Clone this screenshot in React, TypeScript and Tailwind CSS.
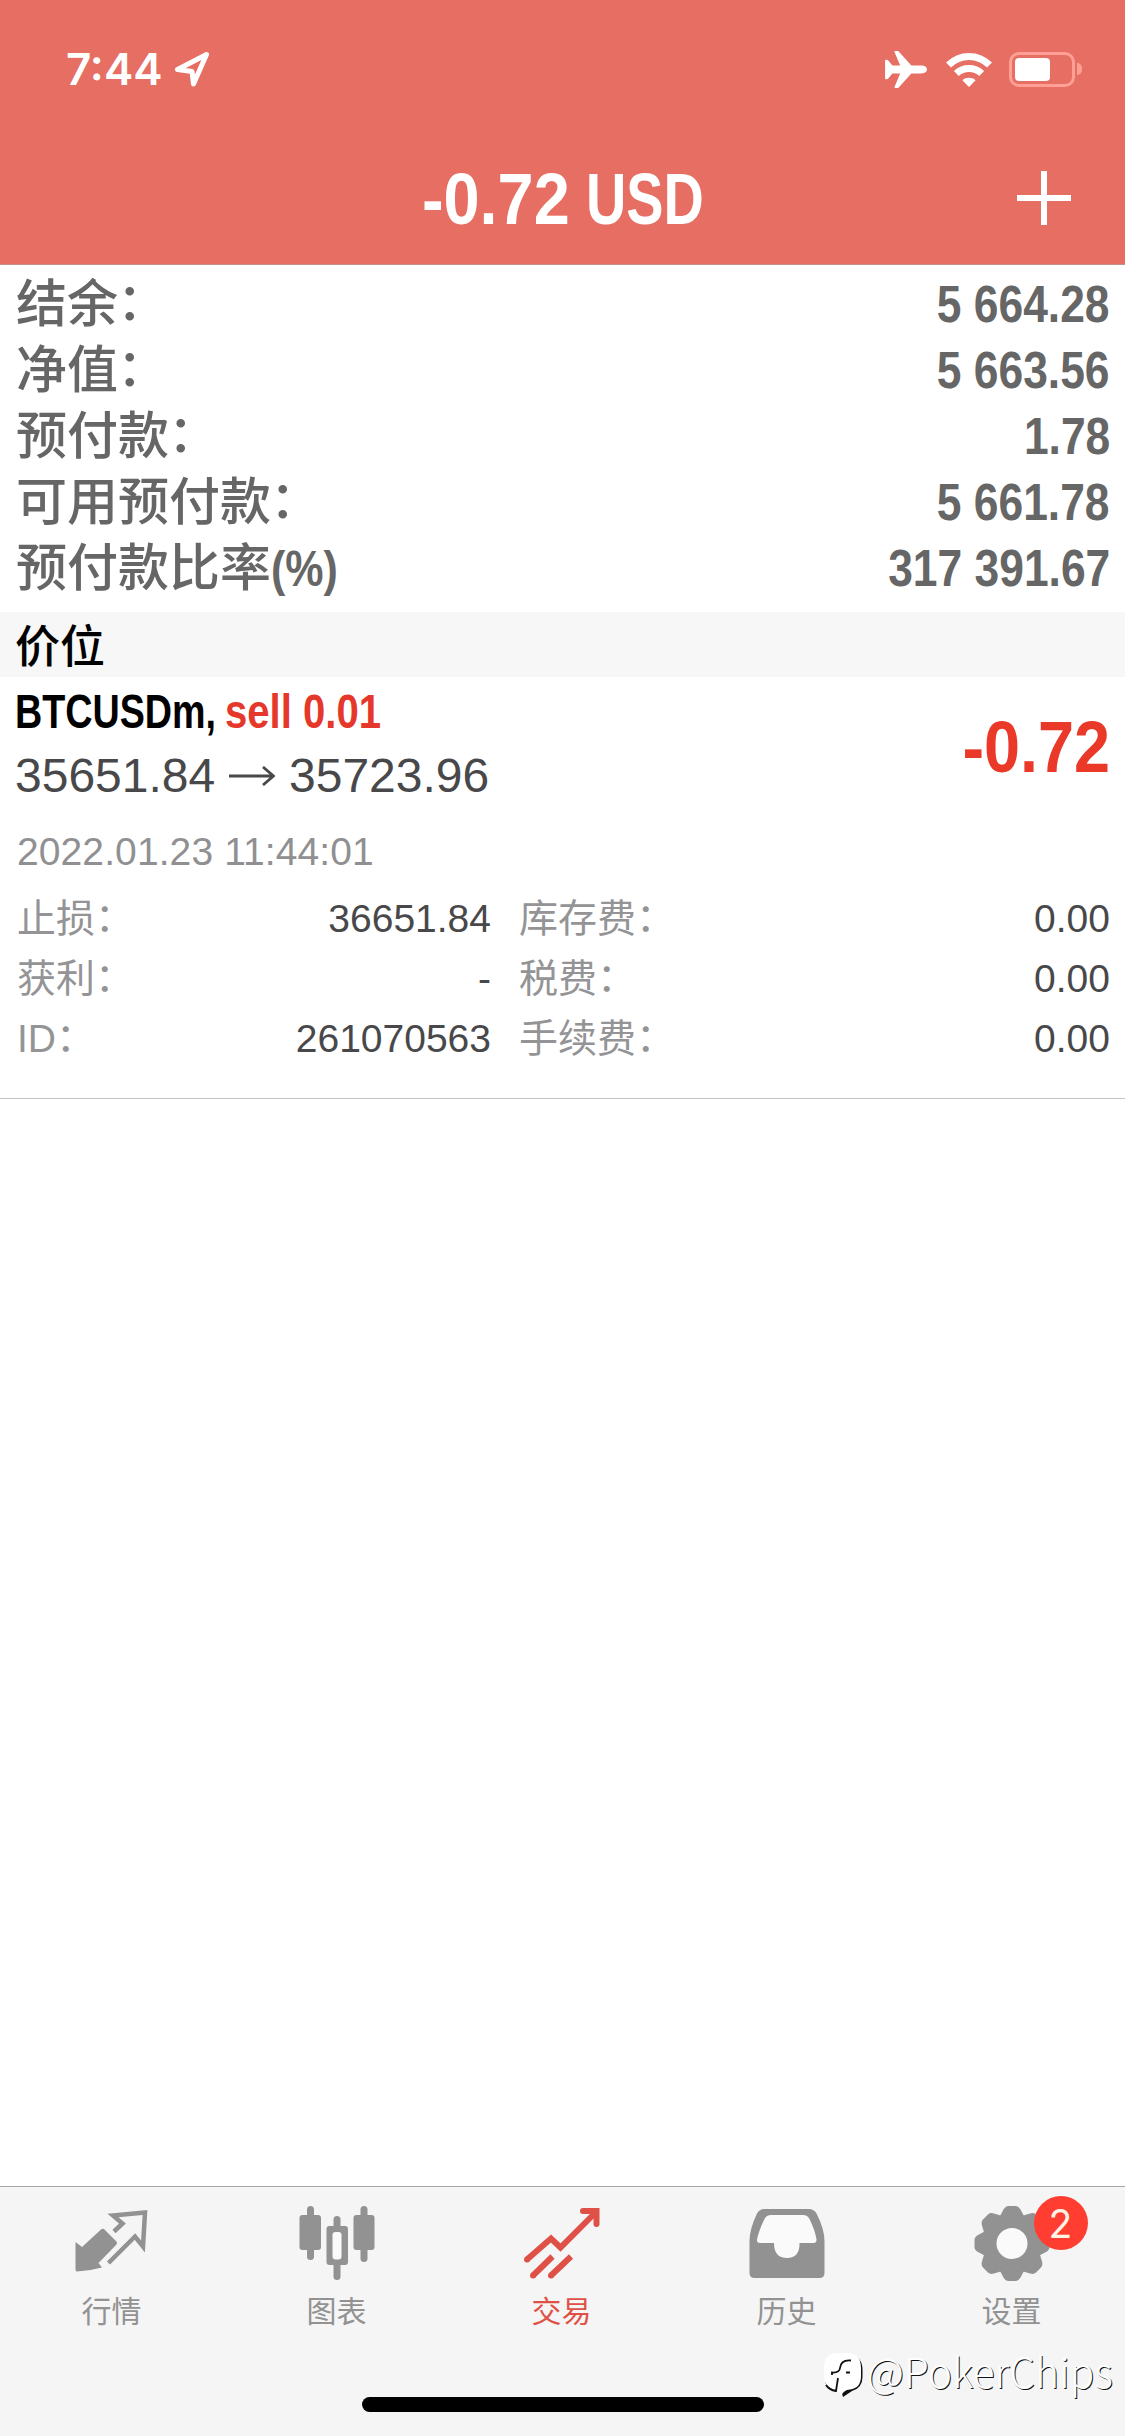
import React from "react";

const cjk = "font-['Noto_Sans_CJK_SC',sans-serif]";
const latin = "font-['Liberation_Sans',Arial,sans-serif]";

const summary = [
  { label: "结余", suffix: "：", value: "5 664.28" },
  { label: "净值", suffix: "：", value: "5 663.56" },
  { label: "预付款", suffix: "：", value: "1.78" },
  { label: "可用预付款", suffix: "：", value: "5 661.78" },
  { label: "预付款比率", suffix: "(%)", value: "317 391.67" },
];

const details = [
  { label: "止损", value: "36651.84", label2: "库存费", value2: "0.00" },
  { label: "获利", value: "-", label2: "税费", value2: "0.00" },
  { label: "ID", value: "261070563", label2: "手续费", value2: "0.00" },
];

function StatusBar() {
  return (
    <div className="flex h-[132px] items-start justify-between pl-[66px] pr-[43px] pt-[42px] text-white">
      <div className="flex h-[54px] items-center">
        <span className="w-[107px] whitespace-nowrap font-['Inter',sans-serif] text-[44px] font-semibold leading-[54px]">7:44</span>
        <svg className="h-[38px] w-[38px]" viewBox="0 0 38 38" fill="none" stroke="currentColor" strokeWidth="5" strokeLinejoin="round">
          <path d="M33.500 4.500 4.500 19.500 19 21.500 20.500 34Z" />
        </svg>
      </div>
      <div className="flex h-[54px] items-center">
        <svg className="mr-[19px] h-[37px] w-[42px]" viewBox="0 0 43 38" fill="currentColor">
          <path d="M43 19c0 2.600-2.500 4-6 4H27L14.500 37c-.6.8-1 1-2 1H10.500c-.8 0-1-.5-.7-1.200L15.500 23H7.500L3.500 28c-.5.700-1 .900-1.700.900H1.200c-.8 0-1.200-.3-1.200-1V10.100c0-.7.4-1 1.200-1h.6c.7 0 1.200.2 1.700.9L7.500 15h8L9.800 1.200C9.500.5 9.700 0 10.500 0h2c1 0 1.400.2 2 1L27 15H37c3.500 0 6 1.400 6 4Z" />
        </svg>
        <svg className="mr-[17px] h-[35px] w-[46px]" viewBox="0 0 46 35" fill="none" stroke="currentColor" strokeWidth="7">
          <path d="M2.500 13C14 1.500 32 1.500 43.500 13" />
          <path d="M10.300 21.500c7.200-6.700 18.200-6.700 25.400 0" />
          <path d="m23 35-6.600-6.800c3.600-3.200 9.600-3.200 13.200 0Z" fill="currentColor" stroke="none" />
        </svg>
        <div className="h-[35px] w-[66px] rounded-[10px] border-[3px] border-[#ff9f95] p-[3px]">
          <div className="h-full w-[35px] rounded-[4px] bg-white" />
        </div>
        <div className="ml-[2px] h-[12px] w-[5px] rounded-r-full bg-[#ff9f95]" />
      </div>
    </div>
  );
}

function TitleBar() {
  return (
    <div className="grid h-[132px] grid-cols-[1fr_282px_1fr] items-center">
      <div />
      <h1 className={`${latin} flex h-[132px] whitespace-nowrap text-[72px] font-bold leading-[134px] text-white`}>
        <span className="w-[164px] origin-left scale-x-90">-0.72</span>
        <span className="w-[112px]">
          <span className="inline-block origin-left scale-x-[.775]">USD</span>
        </span>
      </h1>
      <svg className="mr-[54px] h-[54px] w-[54px] justify-self-end" viewBox="0 0 54 54" stroke="#fff" strokeWidth="6">
        <path d="M0 27H54M27 0V54" />
      </svg>
    </div>
  );
}

function DetailLabel({ text }: { text: string }) {
  return (
    <span className="font-['Liberation_Sans','Noto_Sans_CJK_SC',sans-serif] text-[#949496]">
      {text}
      <span className="inline-block -translate-y-px">：</span>
    </span>
  );
}

function Position() {
  return (
    <section className="h-[422px] border-b border-[#c4c4c6]">
      <div className="flex h-[140px] justify-between pl-[15px] pr-[15px]">
        <div>
          <div className={`${latin} flex h-[66px] whitespace-nowrap text-[48px] font-bold leading-[70px]`}>
            <div className="w-[210px]">
              <span className="inline-block origin-left scale-x-[.785] text-black">BTCUSDm,</span>
            </div>
            <span className="inline-block origin-left scale-x-[.835] text-[#e5382b]">sell 0.01</span>
          </div>
          <div className={`${latin} flex h-[66px] items-center whitespace-nowrap text-[48px] leading-[66px] text-[#48484a]`}>
            <span className="w-[214px]">35651.84</span>
            <svg className="mr-[14px] h-[20px] w-[46px]" viewBox="0 0 46 20" fill="none" stroke="currentColor" strokeWidth="2.800">
              <path d="M0 10H44M34 1 44.500 10 34 19" />
            </svg>
            <span>35723.96</span>
          </div>
        </div>
        <span className={`${latin} origin-right scale-x-90 self-center whitespace-nowrap text-[72px] font-bold leading-[80px] text-[#ea3829]`}>-0.72</span>
      </div>
      <div className={`${latin} h-[72px] pl-[17px] pt-[6px] text-[39px] leading-[58px] tracking-[0.1px] text-[#909092]`}>2022.01.23 11:44:01</div>
      {details.map((d) => (
        <div key={d.label} className="grid h-[60px] grid-cols-[474px_591px] gap-x-[28px] pl-[17px] text-[39px] leading-[60px] text-[#48484a]">
          <div className="flex justify-between">
            <DetailLabel text={d.label} />
            <span className={latin}>{d.value}</span>
          </div>
          <div className="flex justify-between">
            <DetailLabel text={d.label2} />
            <span className={latin}>{d.value2}</span>
          </div>
        </div>
      ))}
    </section>
  );
}

function QuotesIcon() {
  return (
    <svg className="h-[76px] w-[76px]" viewBox="0 0 76 76">
      <path d="M1.500 36 8 41 27 23.500q2-1.500 4 .5L42 35q2 2 0 4L24.500 57l3.500 4.500Q15 65 3 65.500q-1.500 0-1.500-2Z" fill="#929292" />
      <path d="M40 25.500 48.500 17.500 39 9.500 71 6.500 69 40.500 61 30.500 34.500 57" fill="none" stroke="#929292" strokeWidth="4.500" />
    </svg>
  );
}

function ChartIcon() {
  return (
    <svg className="h-[76px] w-[76px]" viewBox="0 0 76 76" fill="#929292">
      <rect x="8" y="0" width="7" height="54" rx="3.500" />
      <rect x="0.500" y="9" width="21.500" height="35" rx="3" />
      <rect x="34.500" y="10" width="7" height="64" rx="3.500" />
      <rect x="27.500" y="20" width="21.500" height="39" rx="3" />
      <rect x="33.500" y="26" width="9" height="27.500" rx="3" fill="#fafafa" />
      <rect x="61.500" y="0" width="7" height="56" rx="3.500" />
      <rect x="54.500" y="9" width="21" height="35" rx="3" />
    </svg>
  );
}

function TradeIcon() {
  return (
    <svg className="h-[76px] w-[76px]" viewBox="0 0 76 76" fill="none" stroke="#df5147" strokeWidth="6">
      <path d="M3 53.500 27 32.500l9.500 9L71 7" />
      <path d="M3 53.500h.1M9 69.500h.1M27 69.500h.1" strokeLinecap="round" />
      <path d="M59 5H72.500V18" strokeLinecap="round" />
      <path d="M9 69.500 28.500 50.500M27 69.500 47 50.500" />
    </svg>
  );
}

function HistoryIcon() {
  return (
    <svg className="h-[76px] w-[76px]" viewBox="0 0 76 76">
      <path d="M15 3H60q5 0 7.500 4.500Q75.500 23 75.500 35V67q0 5-5 5H5.500q-5 0-5-5V35Q.5 23 8 7.500 10.500 3 15 3Z" fill="#929292" />
      <path d="M22 9H54q4.500 0 6.500 4Q66 24 67.500 33.500q.3 3.500-3 3.500H50.500q.5 15-12.500 15T25 37H11q-3.500 0-3-3.500Q10 24 15.500 13q2-4 6.500-4Z" fill="#fafafa" />
    </svg>
  );
}

function SettingsIcon() {
  return (
    <svg className="h-[76px] w-[76px]" viewBox="0 0 76 76">
      <circle cx="38" cy="37.500" r="29.500" fill="#929292" />
      {[0, 45, 90, 135, 180, 225, 270, 315].map((angle) => (
        <path key={angle} d="M25 12 29.500 3.500Q31.500 0 34.500 0h7Q44.500 0 46.500 3.500L51 12Z" fill="#929292" transform={`rotate(${angle} 38 37.500)`} />
      ))}
      <circle cx="38" cy="37.500" r="15.500" fill="#fafafa" />
    </svg>
  );
}

const tabs = [
  { label: "行情", icon: <QuotesIcon /> },
  { label: "图表", icon: <ChartIcon /> },
  { label: "交易", icon: <TradeIcon />, active: true },
  { label: "历史", icon: <HistoryIcon /> },
  { label: "设置", icon: <SettingsIcon />, badge: "2" },
];

function TabBar() {
  return (
    <nav className="relative h-[250px] border-t border-[#a6a6a6] bg-[#f5f5f5]">
      <div className="-ml-px mr-px grid grid-cols-5 pt-[19px]">
        {tabs.map((t) => (
          <div key={t.label} className="flex flex-col items-center">
            <div className="relative h-[76px] w-[76px]">
              {t.icon}
              {t.badge && (
                <span className="absolute -top-[10px] left-[60px] flex h-[54px] w-[54px] items-center justify-center rounded-full bg-[#ff3d31] font-['Inter',sans-serif] text-[39px] leading-none text-[#fff3e6]">{t.badge}</span>
              )}
            </div>
            <span className={`${cjk} mt-[5px] text-[30px] leading-[44px] ${t.active ? "text-[#df5147]" : "text-[#929292]"}`}>{t.label}</span>
          </div>
        ))}
      </div>
      <div className="absolute bottom-[24px] left-[362px] h-[15px] w-[402px] rounded-full bg-black" />
      <div className="absolute left-[823px] top-[161px] flex items-start">
        <svg className="mt-[4px] h-[46px] w-[42px]" viewBox="0 0 42 46">
          <path d="M28 3Q39.500 5 39.500 18V25Q39.500 36 29 39L20 45 18.500 40M2 30Q5 38 12 39.500" fill="#111" />
          <path d="M14 1H24Q38 1 38 16V24Q38 36 27 37.500 20 38 18.500 44L14 38Q1 36 1 24V16Q1 1 14 1Z" fill="#fff" />
          <path d="M28 8.500Q18 7.500 17 16 16.500 21 9 20.500v2.500M23 20.500h4M15 26 13 39Q6 38 3 33" fill="none" stroke="#111" strokeWidth="1.800" />
        </svg>
        <span className={`${cjk} ml-[2px] whitespace-nowrap text-[40.500px] font-light leading-[46px] tracking-[0.200px] text-white [text-shadow:1px_1px_0_#111]`}>@PokerChips</span>
      </div>
    </nav>
  );
}

export default function App() {
  return (
    <div className="flex h-[2436px] w-[1125px] flex-col overflow-hidden bg-white">
      <header className="h-[265px] border-b border-[#c98f8a] bg-[#e66e62]">
        <StatusBar />
        <TitleBar />
      </header>
      <section className="h-[347px] pl-[16px] pr-[15px] pt-[2px] text-[51px] leading-[66px] text-[#666666]">
        {summary.map((row) => (
          <div key={row.label} className="flex h-[66px] justify-between whitespace-nowrap">
            <span className={`${cjk} font-medium`}>
              {row.label}
              {row.suffix === "：" ? (
                <span className="inline-block -translate-x-px -translate-y-[2px]">：</span>
              ) : (
                <span className={`${latin} inline-block origin-left scale-x-[.86] text-[50px] font-bold`}>{row.suffix}</span>
              )}
            </span>
            <span className={`${latin} origin-right scale-x-[.87] font-bold leading-[75px]`}>{row.value}</span>
          </div>
        ))}
      </section>
      <h2 className={`${cjk} h-[65px] bg-[#f7f7f7] pl-[15px] text-[45px] font-medium leading-[63px] text-black`}>价位</h2>
      <Position />
      <main className="flex-1" />
      <TabBar />
    </div>
  );
}
